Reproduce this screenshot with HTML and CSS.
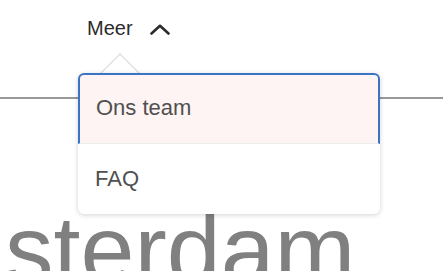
FILE: index.html
```html
<!DOCTYPE html>
<html lang="nl">
<head>
<meta charset="utf-8">
<title>Meer</title>
<link rel="stylesheet" href="styles.css">
</head>
<body>
<header class="header">
  <nav class="nav">
    <div class="nav-item">
      <button class="nav-button" type="button">
        <span>Meer</span>
        <svg class="chevron" width="20" height="11" viewBox="0 0 20 11" aria-hidden="true">
          <path d="M1.5 9.5 L10 1.8 L18.5 9.5" fill="none" stroke="#2b2b2b" stroke-width="2.6" stroke-linecap="round" stroke-linejoin="round"/>
        </svg>
      </button>
      <div class="menu">
        <span class="caret"></span>
        <ul class="menu-list">
          <li class="menu-item is-focused">Ons team</li>
          <li class="menu-item">FAQ</li>
        </ul>
      </div>
    </div>
  </nav>
</header>
<div class="rule"></div>
<main class="hero">
  <h1 class="hero-title">sterdam</h1>
</main>
</body>
</html>
```

FILE: styles.css
```css
* { box-sizing: border-box; }

html, body {
  margin: 0;
  padding: 0;
  background: #ffffff;
  overflow: hidden;
}

body {
  width: 443px;
  height: 271px;
  font-family: "Liberation Sans", Arial, sans-serif;
}

.header {
  height: 97px;
}

.nav {
  display: flex;
  padding-left: 87px;
  padding-top: 17px;
}

.nav-item {
  position: relative;
}

.nav-button {
  display: flex;
  align-items: center;
  gap: 17px;
  padding: 0;
  border: 0;
  background: none;
  font-family: inherit;
  font-size: 20px;
  line-height: 23px;
  color: #2b2b2b;
  cursor: pointer;
}

.chevron {
  display: block;
  margin-top: 1px;
}

.menu {
  position: absolute;
  top: 56px;
  left: -9px;
  width: 302px;
  z-index: 2;
}

.caret {
  position: absolute;
  top: -14px;
  left: 28px;
  width: 28px;
  height: 28px;
  background: #ffffff;
  border-left: 1px solid #d6d6d6;
  border-top: 1px solid #d6d6d6;
  transform: rotate(45deg);
}

.menu-list {
  position: relative;
  list-style: none;
  margin: 0;
  padding: 0;
  background: #ffffff;
  border-radius: 6px;
  box-shadow: 0 1px 5px rgba(0, 0, 0, 0.18);
}

.menu-item {
  display: flex;
  align-items: center;
  height: 70px;
  padding-left: 15px;
  font-size: 22px;
  color: #505050;
  border-left: 2px solid transparent;
  border-right: 2px solid transparent;
}

.menu-item.is-focused {
  height: 71px;
  padding-left: 16px;
  padding-bottom: 2px;
  background: #fdf4f3;
  border-top: 2px solid #3b74c4;
  border-left-color: #3b74c4;
  border-right-color: #3b74c4;
  border-radius: 6px 6px 0 0;
  border-bottom: 1px solid #ececec;
}

.rule {
  height: 2px;
  background: #999999;
}

.hero {
  height: 172px;
  overflow: hidden;
  padding-top: 102px;
  padding-left: 5px;
}

.hero-title {
  margin: 0;
  font-size: 97px;
  line-height: 97px;
  font-weight: normal;
  color: #808080;
  white-space: nowrap;
}
```
